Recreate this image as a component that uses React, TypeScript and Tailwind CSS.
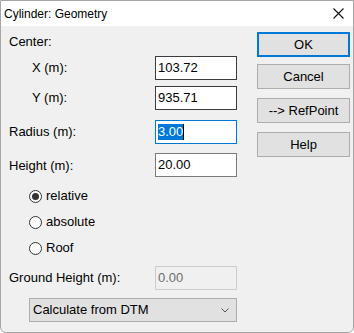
import React from "react";

const font = { fontFamily: '"Liberation Sans", Arial, sans-serif' };

function Field({ value, tone = "dark" }: { value: string; tone?: "dark" | "light" }) {
  return (
    <div
      className={`w-[82px] h-[24px] bg-white border flex items-center pl-[2px] text-[13px] text-black ${
        tone === "dark" ? "border-[#3c3c3c]" : "border-[#7a7a7a]"
      }`}
    >
      {value}
    </div>
  );
}

function Radio({ label, checked }: { label: string; checked?: boolean }) {
  return (
    <div className="h-[20px] flex items-center pl-[20px]">
      <div className="w-[13px] h-[13px] rounded-full border border-[#333] bg-white flex items-center justify-center">
        {checked && <div className="w-[7px] h-[7px] rounded-full bg-[#333]" />}
      </div>
      <span className="ml-[4px] text-[13px]">{label}</span>
    </div>
  );
}

function Btn({ label, primary }: { label: string; primary?: boolean }) {
  return (
    <div
      className={`w-[93px] h-[25px] bg-[#e1e1e1] flex items-center justify-center text-[13px] text-black ${
        primary ? "border-2 border-[#0078d7]" : "border border-[#adadad]"
      }`}
    >
      {label}
    </div>
  );
}

export default function App() {
  return (
    <div
      className="w-[354px] h-[333px] bg-[#f0f0f0] border border-[#a6a6a6] rounded-b-[6px] flex flex-col overflow-hidden text-black"
      style={font}
    >
      {/* title bar */}
      <div className="h-[25px] bg-white flex items-center justify-between pl-[3px] pr-[9px] shrink-0">
        <span className="text-[12px]">Cylinder: Geometry</span>
        <svg width="11" height="11" viewBox="0 0 11 11">
          <path d="M0.5 0.5 L10.5 10.5 M10.5 0.5 L0.5 10.5" stroke="#111" strokeWidth="1.1" />
        </svg>
      </div>

      <div className="flex">
        {/* left side */}
        <div className="w-[236px] flex flex-col pl-[8px] pt-[8px] text-[13px]">
          <div className="h-[16px] flex items-center">Center:</div>

          <div className="mt-[6px] flex items-center justify-between">
            <span className="pl-[23px]">X (m):</span>
            <Field value="103.72" />
          </div>
          <div className="mt-[6px] flex items-center justify-between">
            <span className="pl-[23px]">Y (m):</span>
            <Field value="935.71" />
          </div>
          <div className="mt-[10px] flex items-center justify-between">
            <span>Radius (m):</span>
            <div className="w-[82px] h-[24px] bg-white border border-[#0078d7] flex items-center pl-[2px]">
              <span className="bg-[#0078d7] text-white leading-[16px]">3.00</span>
              <span className="w-[1px] h-[16px] bg-black" />
            </div>
          </div>
          <div className="mt-[9px] flex items-center justify-between">
            <div className="h-[13px] overflow-hidden flex items-end mt-[2px]">
              <span className="leading-[15px]">Height (m):</span>
            </div>
            <Field value="20.00" tone="light" />
          </div>

          <div className="mt-[9px] flex flex-col gap-[6px]">
            <Radio label="relative" checked />
            <Radio label="absolute" />
            <Radio label="Roof" />
          </div>

          <div className="mt-[8px] flex items-center justify-between">
            <span>Ground Height (m):</span>
            <div className="w-[82px] h-[24px] bg-[#f0f0f0] border border-[#cccccc] flex items-center pl-[2px] text-[#6d6d6d]">
              0.00
            </div>
          </div>

          <div className="mt-[8px] ml-[20px] h-[24px] bg-[#e1e1e1] border border-[#adadad] flex items-center justify-between pl-[3px] pr-[7px]">
            <span>Calculate from DTM</span>
            <svg width="8" height="5" viewBox="0 0 8 5">
              <path d="M0.5 0.5 L4 4 L7.5 0.5" fill="none" stroke="#555" strokeWidth="1" />
            </svg>
          </div>
        </div>

        {/* right side buttons */}
        <div className="ml-[20px] pt-[6px] flex flex-col">
          <Btn label="OK" primary />
          <div className="mt-[7px]">
            <Btn label="Cancel" />
          </div>
          <div className="mt-[9px]">
            <Btn label="--> RefPoint" />
          </div>
          <div className="mt-[9px]">
            <Btn label="Help" />
          </div>
        </div>
      </div>
    </div>
  );
}
